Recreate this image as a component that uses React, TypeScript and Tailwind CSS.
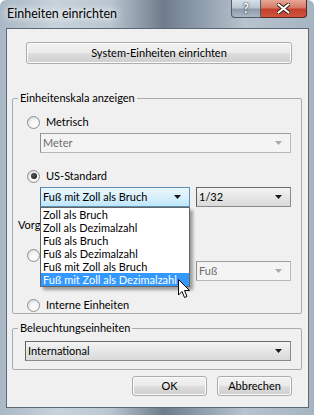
import type { ReactNode } from 'react'

type ComboVariant = 'normal' | 'disabled' | 'focused'

const comboStyles: Record<ComboVariant, string> = {
  normal:
    'border-[#8a8a8a] border-l-[#5f5f5f] border-t-[#6a6a6a] bg-[linear-gradient(#f3f3f3,#e6e6e6_50%,#d9d9d9)] text-black',
  disabled: 'border-[#b5b9bc] border-l-[#8c9094] border-t-[#9a9ea2] bg-[#f4f4f4] text-[#6d6d6d]',
  focused:
    'border-[#5c8fb8] border-l-[#3d6f98] bg-[linear-gradient(#eaf6fd,#d9f0fc_50%,#bee6fd)] text-black',
}

function Arrow({ muted }: { muted?: boolean }) {
  return (
    <svg width="7" height="4" viewBox="0 0 7 4" className="shrink-0">
      <polygon points="0,0 7,0 3.5,4" fill={muted ? '#a8a8a8' : '#1a1a1a'} />
    </svg>
  )
}

function Combo({
  value,
  variant = 'normal',
  className = '',
}: {
  value: string
  variant?: ComboVariant
  className?: string
}) {
  return (
    <div
      className={`flex h-[20px] items-center justify-between border pl-[2px] pr-[8px] ${comboStyles[variant]} ${className}`}
    >
      <span className="truncate">{value}</span>
      <Arrow muted={variant === 'disabled'} />
    </div>
  )
}

function Radio({ checked, label }: { checked?: boolean; label?: string }) {
  return (
    <div className="flex h-[14px] items-center gap-[6px]">
      <span className="flex h-[13px] w-[13px] items-center justify-center rounded-full border border-[#8e8f8f] bg-[radial-gradient(circle_at_60%_65%,#ffffff_0%,#f4f4f4_45%,#c9c9c9_100%)]">
        {checked && <span className="h-[6px] w-[6px] rounded-full bg-[radial-gradient(circle_at_40%_40%,#5a5a5a,#0a0a0a)]" />}
      </span>
      {label && <span>{label}</span>}
    </div>
  )
}

function Button({ children, className = '' }: { children: ReactNode; className?: string }) {
  return (
    <div
      className={`flex items-center justify-center rounded-[3px] border border-[#acacac] bg-[linear-gradient(#f2f2f2,#ebebeb_50%,#dddddd_51%,#cfcfcf)] shadow-[inset_0_0_0_1px_#fcfcfc] ${className}`}
    >
      {children}
    </div>
  )
}

function Group({ title, children, className = '' }: { title: string; children: ReactNode; className?: string }) {
  return (
    <fieldset className={`rounded-[2px] border border-[#a8acb0] ${className}`}>
      <legend className="ml-[5px] px-[2px] leading-[14px]">{title}</legend>
      {children}
    </fieldset>
  )
}

const listItems = [
  'Zoll als Bruch',
  'Zoll als Dezimalzahl',
  'Fuß als Bruch',
  'Fuß als Dezimalzahl',
  'Fuß mit Zoll als Bruch',
  'Fuß mit Zoll als Dezimalzahl',
]

export default function App() {
  return (
    <div className="relative h-[415px] w-[314px] overflow-hidden rounded-t-[6px] bg-[linear-gradient(90deg,#a9b8c6_0%,#c8d2db_18%,#bac6d1_35%,#6e7c8b_52%,#8998a7_62%,#b7c3ce_78%,#a6b4c2_100%)] font-['Lato','Segoe_UI',sans-serif] text-[11px] leading-[14px] text-black">
      <div className="flex h-[28px] items-start">
        <span className="pl-[7px] pt-[6px] text-[12.5px] leading-[16px] text-black [text-shadow:0_0_6px_#ffffff,0_0_10px_#ffffff]">
          Einheiten einrichten
        </span>
        <div className="ml-auto mr-[7px] flex h-[18px]">
          <div className="flex w-[30px] items-center justify-center rounded-bl-[4px] border border-t-0 border-[#4d5a67] bg-[linear-gradient(#d9e1e8,#b9c5d0_45%,#8e9cab_55%,#a9b6c2)] text-[13px] font-bold leading-none text-white [text-shadow:0_0_2px_#24303c,0_0_1px_#24303c]">
            ?
          </div>
          <div className="flex w-[46px] items-center justify-center rounded-br-[4px] border border-l-0 border-t-0 border-[#5a2a22] bg-[linear-gradient(#e8a796,#d47a66_45%,#c2412c_55%,#d0533b)]">
            <svg width="13" height="11" viewBox="0 0 13 11">
              <path d="M1.5 1.5 L11.5 9.5 M11.5 1.5 L1.5 9.5" stroke="#3a1a14" strokeWidth="4" strokeLinecap="round" />
              <path d="M1.5 1.5 L11.5 9.5 M11.5 1.5 L1.5 9.5" stroke="#ffffff" strokeWidth="2.2" strokeLinecap="round" />
            </svg>
          </div>
        </div>
      </div>

      <div className="ml-[6px] flex h-[380px] w-[303px] flex-col border border-[#5b6773] bg-[#f0f0f0]">
        <Button className="ml-[19px] mt-[13px] h-[22px] w-[266px]">System-Einheiten einrichten</Button>

        <Group title="Einheitenskala anzeigen" className="ml-[5px] mt-[27px] w-[290px] pb-[1px]">
          <div className="ml-[14px] mt-[10px]">
            <Radio label="Metrisch" />
          </div>
          <Combo value="Meter" variant="disabled" className="ml-[27px] mt-[4px] w-[251px]" />

          <div className="ml-[14px] mt-[16px]">
            <Radio checked label="US-Standard" />
          </div>
          <div className="ml-[27px] mt-[4px] flex gap-[6px]">
            <Combo value="Fuß mit Zoll als Bruch" variant="focused" className="w-[150px]" />
            <Combo value="1/32" className="w-[95px]" />
          </div>

          <div className="ml-[5px] mt-[11px]">Vorgabeeinheiten:</div>
          <div className="ml-[14px] mt-[16px]">
            <Radio />
          </div>
          <div className="ml-[27px] mt-[-1px] flex gap-[6px]">
            <Combo value="" variant="disabled" className="w-[150px]" />
            <Combo value="Fuß" variant="disabled" className="w-[95px]" />
          </div>

          <div className="ml-[14px] mt-[17px]">
            <Radio label="Interne Einheiten" />
          </div>
        </Group>

        <Group title="Beleuchtungseinheiten" className="ml-[5px] mt-[7px] w-[290px] pb-[8px]">
          <Combo value="International" className="ml-[12px] mt-[6px] w-[266px]" />
        </Group>

        <div className="mr-[16px] mt-[6px] flex justify-end gap-[10px]">
          <Button className="h-[20px] w-[75px]">OK</Button>
          <Button className="h-[20px] w-[75px]">Abbrechen</Button>
        </div>
      </div>

      <div className="absolute left-[40px] top-[207px] w-[150px] border border-[#646464] bg-white shadow-[3px_3px_3px_rgba(0,0,0,0.35)]">
        {listItems.map((item, i) => (
          <div
            key={item}
            className={`h-[13px] pl-[2px] leading-[13px] ${i === listItems.length - 1 ? 'bg-[#3399ff] text-white' : ''}`}
          >
            {item}
          </div>
        ))}
      </div>

      <svg className="absolute left-[178px] top-[279px]" width="13" height="20" viewBox="0 0 13 20">
        <path d="M0.5 0.5 L0.5 16 L4 12.5 L6.5 18.5 L9 17.5 L6.5 11.5 L11.5 11.5 Z" fill="#ffffff" stroke="#000000" strokeWidth="1" strokeLinejoin="miter" />
      </svg>
    </div>
  )
}
